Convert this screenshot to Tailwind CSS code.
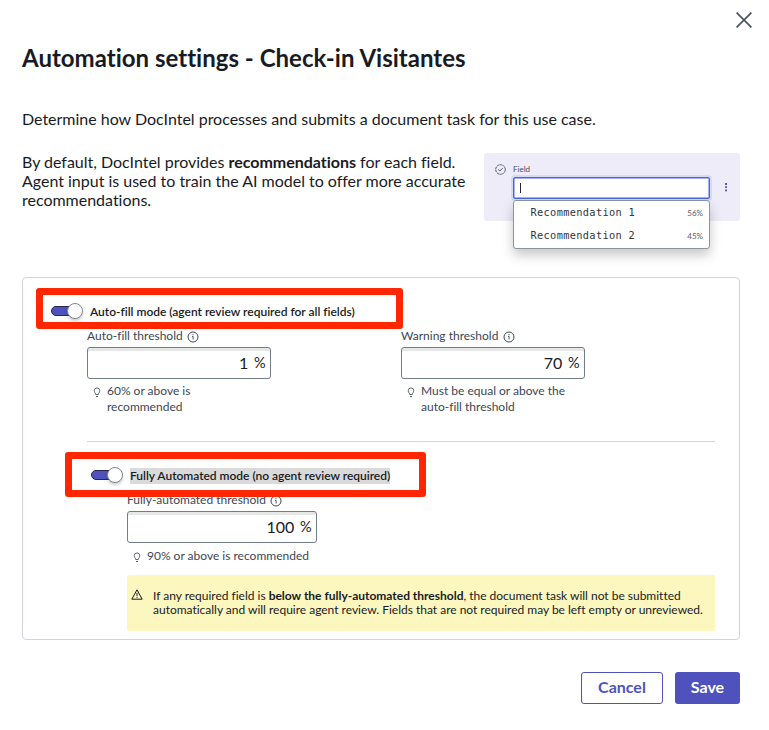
<!DOCTYPE html>
<html lang="en">
<head>
<meta charset="utf-8">
<title>Automation settings</title>
<script src="https://cdn.jsdelivr.net/npm/@tailwindcss/browser@4"></script>
</head>
<body class="bg-white font-['Lato',sans-serif] text-[#181b24] [font-variant-ligatures:none]">
<svg class="hidden">
  <symbol id="info" viewBox="0 0 12 12"><circle cx="6" cy="6" r="5" fill="none" stroke="currentColor"/><path d="M5 5.4H6.1V8.5" fill="none" stroke="currentColor" stroke-width=".9"/><circle cx="6" cy="3.6" r=".6" fill="currentColor"/></symbol>
  <symbol id="bulb" viewBox="0 0 8 12"><path d="M2.6 8.2C2.6 6.6 1 6.2 1 4a3 3 0 0 1 6 0C7 6.2 5.4 6.6 5.4 8.2Z" fill="none" stroke="currentColor" stroke-width=".9"/><path d="M3 10.4H5" stroke="currentColor" stroke-width="1.1"/></symbol>
</svg>
<main class="relative flex h-[730px] w-[769px] flex-col pr-[29px] pl-[22px]">
  <button class="absolute top-[12px] right-[17px] h-4 w-4 text-[#4a5260]" aria-label="Close">
    <svg class="h-4 w-4" viewBox="0 0 16 16"><path d="M.6.6 15.4 15.4M15.4.6.6 15.4" stroke="currentColor" stroke-width="1.6"/></svg>
  </button>
  <h1 class="mt-[43px] h-[30px] text-[24px] leading-[30px] font-bold tracking-[0.01px] whitespace-nowrap">Automation settings - Check-in Visitantes</h1>
  <p class="mt-[36px] h-[19px] text-[16px] leading-[19px] tracking-[-0.013px] whitespace-nowrap">Determine how DocIntel processes and submits a document task for this use case.</p>

  <section class="mt-[25px] flex h-[124px] justify-between">
    <p class="-mt-px text-[16px] leading-[19px] tracking-[-0.013px] whitespace-nowrap">By default, DocIntel provides <b>recommendations</b> for each field.<br>Agent input is used to train the AI model to offer more accurate<br>recommendations.</p>
    <div class="relative h-[68px] w-[256px] rounded-[3px] bg-[#edecf8]">
      <div class="flex h-[24px] items-end pl-[11px]">
        <svg class="mb-[2px] h-[11px] w-[11px] text-[#3d4454]" viewBox="0 0 11 11"><circle cx="5.5" cy="5.5" r="4.8" fill="none" stroke="currentColor" stroke-width=".9" stroke-dasharray="2.4 .6"/><path d="M3.2 5.5 4.8 7 7.7 4.1" fill="none" stroke="currentColor" stroke-width=".9"/></svg>
        <span class="ml-[7px] h-[16px] text-[8px] leading-[16px] text-[#464c5b]">Field</span>
      </div>
      <div class="flex items-center">
        <div class="ml-[29px] flex h-[22px] w-[197px] items-center rounded-[2px] border border-[#4866e4] bg-white pl-[6px] shadow-[0_0_0_2px_#d6d9f8,inset_0_0_0_0.5px_#4866e4]"><span class="h-[10px] w-px bg-[#22262f]"></span></div>
        <svg class="mb-[2px] ml-[14px] h-[10px] w-[4px] text-[#5650a8]" viewBox="0 0 4 10"><path d="M1.1 1h1.9v1.9H1.1zM1.1 4.2h1.9v1.9H1.1zM1.1 7.4h1.9v1.9H1.1z" fill="currentColor"/></svg>
      </div>
      <ul class="absolute top-[47px] left-[28.5px] flex h-[49px] w-[197.5px] flex-col rounded-[3px] border border-[#8d929f] bg-white pr-[6px] pl-[17px] shadow-[0_6px_12px_rgba(0,0,0,0.22)]">
        <li class="flex h-[23px] items-center justify-between"><span class="font-['DejaVu_Sans_Mono',monospace] text-[10.3px] tracking-[0.34px] text-[#30343e]">Recommendation 1</span><span class="text-[8px] text-[#555b6b]">56%</span></li>
        <li class="flex h-[24px] items-center justify-between"><span class="font-['DejaVu_Sans_Mono',monospace] text-[10.3px] tracking-[0.34px] text-[#30343e]">Recommendation 2</span><span class="text-[8px] text-[#555b6b]">45%</span></li>
      </ul>
    </div>
  </section>

  <section class="relative flex h-[363px] flex-col rounded-[4px] border border-[#d2d4da] pl-[28px]">
    <div class="mt-[25px] flex h-[16px] items-center">
      <div class="relative h-[10px] w-[32px]"><div class="h-[10px] w-[28px] rounded-full border border-[#27264f] bg-[#4f52bd]"></div><div class="absolute -top-[3px] right-0 h-4 w-4 rounded-full border border-[#7c8596] bg-white shadow-[0_2px_3px_rgba(0,0,0,0.2)]"></div></div>
      <span class="mt-[2px] ml-[7px] text-[12px] leading-[16px] font-semibold tracking-[-0.01px] whitespace-nowrap">Auto-fill mode (agent review required for all fields)</span>
    </div>
    <div class="ml-[36px] flex h-[123px] w-[628px] border-b border-[#d2d4da] pt-[9px] text-[12px] leading-[16px] text-[#3d4656]">
      <div class="w-[314px]">
        <div class="flex items-center">Auto-fill threshold<svg class="mt-px ml-[4px] h-[12px] w-[12px]"><use href="#info"/></svg></div>
        <div class="mt-[3px] flex h-[32px] w-[184px] items-center justify-end rounded-[3px] border border-[#737c8c] pr-[4.5px] text-[#181b24] shadow-[inset_0_3px_0_#e6e8e7]"><span class="text-[16px]">1</span><span class="ml-[5.5px] text-[14.5px]">%</span></div>
        <div class="mt-[4px] flex pl-[6px]"><svg class="mt-[4px] h-[11px] w-[8px]"><use href="#bulb"/></svg><p class="ml-[6px] whitespace-nowrap">60% or above is<br>recommended</p></div>
      </div>
      <div>
        <div class="flex items-center">Warning threshold<svg class="mt-px ml-[4.5px] h-[12px] w-[12px]"><use href="#info"/></svg></div>
        <div class="mt-[3px] flex h-[32px] w-[184px] items-center justify-end rounded-[3px] border border-[#737c8c] pr-[4.5px] text-[#181b24] shadow-[inset_0_3px_0_#e6e8e7]"><span class="text-[16px]">70</span><span class="ml-[5.5px] text-[14.5px]">%</span></div>
        <div class="mt-[4px] flex pl-[6px]"><svg class="mt-[4px] h-[11px] w-[8px]"><use href="#bulb"/></svg><p class="ml-[6px] whitespace-nowrap">Must be equal or above the<br>auto-fill threshold</p></div>
      </div>
    </div>
    <div class="mt-[25px] ml-[40px] flex h-[16px] items-center">
      <div class="relative h-[10px] w-[32px]"><div class="h-[10px] w-[28px] rounded-full border border-[#27264f] bg-[#4f52bd]"></div><div class="absolute -top-[3px] right-0 h-4 w-4 rounded-full border border-[#7c8596] bg-white shadow-[0_2px_3px_rgba(0,0,0,0.2)]"></div></div>
      <span class="mt-[2px] ml-[7px] h-[16px] bg-[#dadada] text-[12px] leading-[16px] font-semibold tracking-[-0.02px] whitespace-nowrap">Fully Automated mode (no agent review required)</span>
    </div>
    <div class="mt-[9px] ml-[76px] w-[588px] text-[12px] leading-[16px] text-[#3d4656]">
      <div class="flex items-center">Fully-automated threshold<svg class="mt-px ml-[4.5px] h-[12px] w-[12px]"><use href="#info"/></svg></div>
      <div class="mt-[3px] flex h-[32px] w-[190px] items-center justify-end rounded-[3px] border border-[#737c8c] pr-[4.5px] text-[#181b24] shadow-[inset_0_3px_0_#e6e8e7]"><span class="text-[16px]">100</span><span class="ml-[5.5px] text-[14.5px]">%</span></div>
      <div class="mt-[5px] flex pl-[6px]"><svg class="mt-[4px] h-[11px] w-[8px]"><use href="#bulb"/></svg><p class="ml-[6px] whitespace-nowrap">90% or above is recommended</p></div>
      <div class="mt-[11px] flex h-[56px] rounded-[2px] bg-[#fcf6bf] pt-[14px] pl-[4px] text-[#181b24]">
        <svg class="h-[11px] w-[12px]" viewBox="0 0 12 11"><path d="M6 .8 11.2 10.2H.8Z" fill="none" stroke="currentColor" stroke-linejoin="round"/><path d="M6 3.8V6.9M6 7.8V8.8" stroke="currentColor"/></svg>
        <p class="ml-[10px] text-[12px] leading-[14px] tracking-[-0.01px] whitespace-nowrap">If any required field is <b>below the fully-automated threshold</b>, the document task will not be submitted<br>automatically and will require agent review. Fields that are not required may be left empty or unreviewed.</p>
      </div>
    </div>
    <div class="absolute top-[9.5px] left-[13px] h-[41px] w-[367px] rounded-[3px] border-[7px] border-[#ff2600]"></div>
    <div class="absolute top-[173.5px] left-[41.5px] h-[45.5px] w-[361.5px] rounded-[3px] border-[7px] border-[#ff2600]"></div>
  </section>

  <div class="mt-[32px] flex justify-end gap-[12px] text-[16px] leading-[16px] font-bold">
    <button class="h-[32px] w-[82px] rounded-[3px] border border-[#4f52bd] pb-[2px] text-[#4f52bd]">Cancel</button>
    <button class="h-[32px] w-[65px] rounded-[3px] bg-[#4f52bd] pb-[2px] text-white">Save</button>
  </div>
</main>
</body>
</html>
